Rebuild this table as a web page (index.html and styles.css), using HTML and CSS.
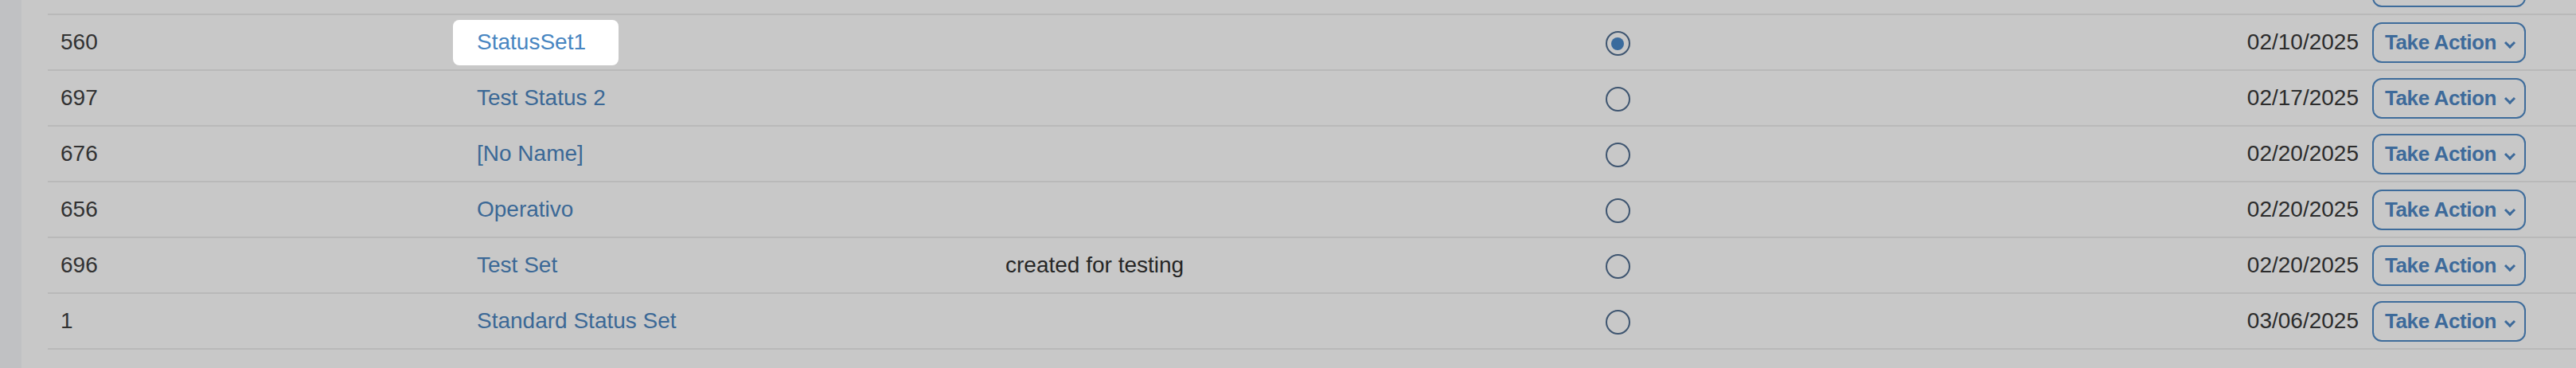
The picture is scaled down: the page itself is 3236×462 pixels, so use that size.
FILE: index.html
```html
<!DOCTYPE html>
<html lang="en">
<head>
<meta charset="utf-8">
<title>Status Sets</title>
<link rel="stylesheet" href="styles.css">
</head>
<body>
<div class="page">
  <div class="strip"></div>
  <div class="content">
    <div class="table">
      <div class="row">
        <div class="cell id"></div>
        <div class="cell name"></div>
        <div class="cell desc"></div>
        <div class="cell sel"><span class="radio"></span></div>
        <div class="cell end"><span class="action ghost" aria-hidden="true"></span></div>
      </div>
      <div class="row">
        <div class="cell id">560</div>
        <div class="cell name"><span class="link focus">StatusSet1</span></div>
        <div class="cell desc"></div>
        <div class="cell sel"><span class="radio on"></span></div>
        <div class="cell end"><span class="date">02/10/2025</span><button class="action">Take Action<span class="chev"></span></button></div>
      </div>
      <div class="row">
        <div class="cell id">697</div>
        <div class="cell name"><span class="link">Test Status 2</span></div>
        <div class="cell desc"></div>
        <div class="cell sel"><span class="radio"></span></div>
        <div class="cell end"><span class="date">02/17/2025</span><button class="action">Take Action<span class="chev"></span></button></div>
      </div>
      <div class="row">
        <div class="cell id">676</div>
        <div class="cell name"><span class="link">[No Name]</span></div>
        <div class="cell desc"></div>
        <div class="cell sel"><span class="radio"></span></div>
        <div class="cell end"><span class="date">02/20/2025</span><button class="action">Take Action<span class="chev"></span></button></div>
      </div>
      <div class="row">
        <div class="cell id">656</div>
        <div class="cell name"><span class="link">Operativo</span></div>
        <div class="cell desc"></div>
        <div class="cell sel"><span class="radio"></span></div>
        <div class="cell end"><span class="date">02/20/2025</span><button class="action">Take Action<span class="chev"></span></button></div>
      </div>
      <div class="row">
        <div class="cell id">696</div>
        <div class="cell name"><span class="link">Test Set</span></div>
        <div class="cell desc">created for testing</div>
        <div class="cell sel"><span class="radio"></span></div>
        <div class="cell end"><span class="date">02/20/2025</span><button class="action">Take Action<span class="chev"></span></button></div>
      </div>
      <div class="row">
        <div class="cell id">1</div>
        <div class="cell name"><span class="link">Standard Status Set</span></div>
        <div class="cell desc"></div>
        <div class="cell sel"><span class="radio"></span></div>
        <div class="cell end"><span class="date">03/06/2025</span><button class="action">Take Action<span class="chev"></span></button></div>
      </div>
    </div>
  </div>
</div>
</body>
</html>
```

FILE: styles.css
```css
html, body {
  margin: 0;
  padding: 0;
  background: #c8c8c8;
}
body {
  font-family: "Liberation Sans", Arial, sans-serif;
  font-size: 28px;
  color: #333333;
}
.page {
  display: flex;
  height: 462px;
  overflow: hidden;
}
.strip {
  width: 27px;
  flex: none;
  background: #c0c1c3;
}
.content {
  flex: 1;
  padding-left: 33px;
}
.table {
  display: flex;
  flex-direction: column;
  margin-top: -51px;
}
.row {
  display: grid;
  grid-template-columns: 523px 664px 733px 104px 1fr;
  height: 68px;
  border-bottom: 2px solid #b9b9b9;
  align-items: center;
}
.cell {
  padding-left: 16px;
  white-space: nowrap;
  display: flex;
  align-items: center;
}
.id { color: #323232; }
.desc { color: #262626; }
.link { color: #3b6896; }
.link.focus {
  display: inline-flex;
  align-items: center;
  height: 57px;
  margin-left: -30px;
  padding: 0 41px 0 30px;
  background: #ffffff;
  border-radius: 8px;
  color: #4785c1;
}
.sel {
  padding-left: 0;
  justify-content: center;
  padding-top: 3px;
}
.radio {
  width: 31px;
  height: 31px;
  box-sizing: border-box;
  border: 2px solid #3e5570;
  border-radius: 50%;
  display: flex;
  align-items: center;
  justify-content: center;
}
.radio.on::after {
  content: "";
  width: 16px;
  height: 16px;
  border-radius: 50%;
  background: #3a6b9d;
}
.end {
  justify-content: flex-end;
  padding-right: 63px;
  gap: 17px;
}
.date { color: #2c2c2c; }
.action {
  display: inline-flex;
  align-items: center;
  box-sizing: border-box;
  width: 193px;
  height: 51px;
  padding: 0 0 0 14px;
  border: 2px solid #3e6c9b;
  border-radius: 12px;
  background: transparent;
  color: #3d6a9a;
  font-family: "Liberation Sans", Arial, sans-serif;
  font-weight: bold;
  font-size: 26px;
  letter-spacing: -0.4px;
}
.chev {
  width: 7px;
  height: 7px;
  border-right: 3px solid #3d6a9a;
  border-bottom: 3px solid #3d6a9a;
  transform: rotate(45deg);
  margin-left: 12px;
  margin-top: 2px;
}
```
